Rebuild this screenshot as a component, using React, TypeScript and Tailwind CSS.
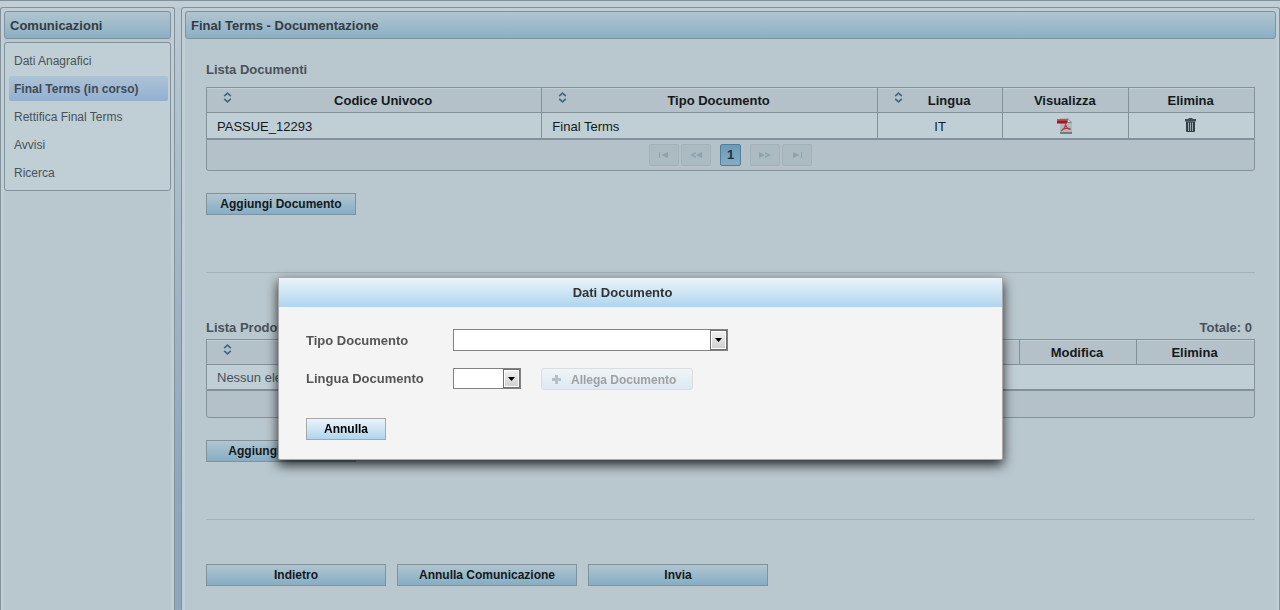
import { useState, type ReactNode } from 'react'

const menuItems = ['Dati Anagrafici', 'Final Terms (in corso)', 'Rettifica Final Terms', 'Avvisi', 'Ricerca']

const documents = [{ code: 'PASSUE_12293', type: 'Final Terms', language: 'IT' }]

function SortIcon() {
  return (
    <svg width="9" height="11" viewBox="0 0 9 11" fill="none" stroke="#3d6880" strokeWidth="1.6" aria-hidden="true">
      <path d="M1.2 4.2 4.5 1.2 7.8 4.2M1.2 6.8 4.5 9.8 7.8 6.8" />
    </svg>
  )
}

function PdfIcon() {
  return (
    <svg width="16" height="17" viewBox="0 0 16 17" aria-hidden="true">
      <path d="M3 1h8l4 4v10H3z" fill="#aeb8bd" />
      <path d="M10 1l5 5h-5z" fill="#75838b" />
      <path d="M11 2.500l2.500 2.500H11z" fill="#cdd6da" />
      <path d="M3 16h12" stroke="#1f2b32" />
      <path d="M0 2.500h10v4H0z" fill="#a81520" />
      <path d="M0 2.500h10v1.500H0z" fill="#c63a44" />
      <path d="M8.500 6.500c.3 3-1.500 5.500-4.500 7.500M8.600 8c.8 2.500 2.500 4 5 4.500M5.500 12.200c2.500-1 5-1.200 8-.3" fill="none" stroke="#b5383d" strokeWidth="1.1" />
    </svg>
  )
}

function TrashIcon() {
  return (
    <svg width="11" height="15" viewBox="0 0 11 15" aria-hidden="true">
      <path d="M3.500 0h4v1H11v2.500H0V1h3.500z" fill="#3e4b53" />
      <path d="M1 3.500h9V13a1 1 0 0 1-1 1H2a1 1 0 0 1-1-1z" fill="#323f47" />
      <path d="M3.500 4.500V13M5.500 4.500V13M7.500 4.500V13" stroke="#9aa8b0" strokeWidth="1" />
    </svg>
  )
}

function PanelTitle({ children }: { children: ReactNode }) {
  return (
    <h2 className="h-7 rounded-[3px] border border-[#82919a] bg-gradient-to-b from-[#b1c5cf] to-[#8bafc6] px-[5px] text-[13px] leading-7 font-bold text-[#333c42]">
      {children}
    </h2>
  )
}

function ActionButton({ width, children }: { width: string; children: ReactNode }) {
  return (
    <button
      type="button"
      className={`h-[22px] border border-[#82919a] bg-gradient-to-b from-[#b1c5cf] to-[#86adc5] text-center text-xs leading-5 font-bold text-[#14191c] ${width}`}
    >
      {children}
    </button>
  )
}

function HeaderCell({ width, sortable, children }: { width?: string; sortable?: boolean; children: ReactNode }) {
  return (
    <th className={`h-[25px] border border-[#82919a] bg-[#b4c1c9] p-0 pt-0.5 text-center text-[13px] leading-[22px] font-bold text-[#14191c] shadow-[inset_0_1px_0_#c0ced5] ${width ?? ''}`}>
      {sortable ? (
        <div className="flex items-start pr-[7px] pl-4">
          <span className="pt-0.5">
            <SortIcon />
          </span>
          <span className="flex-1">{children}</span>
        </div>
      ) : (
        <div className="pr-0.5">{children}</div>
      )}
    </th>
  )
}

function PageButton({ label, path }: { label: string; path: string }) {
  return (
    <button
      type="button"
      disabled
      aria-label={label}
      className="flex h-[22px] w-[30px] items-center justify-center rounded-xs border border-[#a3b1ba] bg-[#acbac2]"
    >
      <svg width="12" height="6" viewBox="0 0 12 6" fill="#8ba2af" aria-hidden="true">
        <path d={path} />
      </svg>
    </button>
  )
}

function SelectBox({ id, size, value, onChange, options }: {
  id: string
  size: string
  value: string
  onChange: (value: string) => void
  options: string[]
}) {
  return (
    <div className={`relative ${size}`}>
      <select
        id={id}
        value={value}
        onChange={(e) => onChange(e.target.value)}
        className="block h-full w-full appearance-none border border-[#828282] bg-white pr-5 pl-1 text-xs text-[#333]"
      >
        <option value=""></option>
        {options.map((o) => (
          <option key={o}>{o}</option>
        ))}
      </select>
      <span className="pointer-events-none absolute inset-y-px right-px flex w-[17px] items-center justify-center border border-[#707070] bg-gradient-to-b from-[#f2f2f2] to-[#cfcfcf] shadow-[inset_0_0_0_1px_#fff]">
        <svg width="7" height="4" viewBox="0 0 7 4" aria-hidden="true">
          <path d="M0 0h7L3.500 4z" fill="#000" />
        </svg>
      </span>
    </div>
  )
}

export default function App() {
  const [active, setActive] = useState('Final Terms (in corso)')
  const [docType, setDocType] = useState('')
  const [language, setLanguage] = useState('')

  return (
    <div className="flex h-screen flex-col overflow-hidden bg-[#c0ced5] font-['Liberation_Sans',Arial,sans-serif]">
      <div className="h-px shrink-0 bg-[#82919a]" />

      <div className="mt-1.5 flex min-h-0 flex-1 bg-gradient-to-b from-[#bccad3] to-[#8fa6bc] to-80%">
        {/* Sidebar */}
        <aside className="w-[175px] shrink-0 rounded-t-[3px] border border-b-0 border-[#82919a] bg-[#c0ced5] px-[3px] pt-[3px]">
          <div className="flex h-full flex-col bg-[#b9c7ce]">
            <PanelTitle>Comunicazioni</PanelTitle>
            <nav className="mt-[3px] flex flex-col gap-[3px] rounded-[3px] border border-[#82919a] bg-[#c0ced5] py-[5px] pr-0.5 pl-1">
              {menuItems.map((item) => (
                <a
                  key={item}
                  href="#"
                  onClick={() => setActive(item)}
                  className={`block h-[25px] rounded-xs px-[5px] text-xs leading-[26px] ${
                    item === active
                      ? 'bg-gradient-to-b from-[#adc2d5] to-[#93b0d3] font-bold text-[#3f4b55]'
                      : 'text-[#48525a]'
                  }`}
                >
                  {item}
                </a>
              ))}
            </nav>
          </div>
        </aside>

        {/* Main panel */}
        <main className="ml-1.5 min-w-0 flex-1 rounded-t-[3px] border border-b-0 border-[#82919a] bg-[#c0ced5] px-[3px] pt-[3px]">
          <div className="h-full bg-[#b9c7ce]">
            <PanelTitle>Final Terms - Documentazione</PanelTitle>

            <div className="px-[21px] pt-[21px]">
              <h3 className="text-[13px] leading-5 font-bold text-[#48525a]">Lista Documenti</h3>
              <table className="mt-[7px] w-full table-fixed border-collapse text-[13px] text-[#14191c]">
                <thead>
                  <tr>
                    <HeaderCell width="w-[32%]" sortable>Codice Univoco</HeaderCell>
                    <HeaderCell width="w-[32%]" sortable>Tipo Documento</HeaderCell>
                    <HeaderCell width="w-[12%]" sortable>Lingua</HeaderCell>
                    <HeaderCell width="w-[12%]">Visualizza</HeaderCell>
                    <HeaderCell width="w-[12%]">Elimina</HeaderCell>
                  </tr>
                </thead>
                <tbody>
                  {documents.map((d) => (
                    <tr key={d.code} className="bg-[#c0ced5]">
                      <td className="h-[26px] border border-[#82919a] px-2.5 pt-0.5 pb-0">{d.code}</td>
                      <td className="border border-[#82919a] px-2.5 pt-0.5 pb-0">{d.type}</td>
                      <td className="border border-[#82919a] p-0 pt-0.5 text-center">{d.language}</td>
                      <td className="border border-[#82919a] p-0 pr-0.5">
                        <button type="button" aria-label="Visualizza" className="mx-auto block">
                          <PdfIcon />
                        </button>
                      </td>
                      <td className="border border-[#82919a] p-0 pr-0.5">
                        <button type="button" aria-label="Elimina" className="mx-auto block">
                          <TrashIcon />
                        </button>
                      </td>
                    </tr>
                  ))}
                </tbody>
              </table>
              <div className="flex h-8 items-center justify-center rounded-b-[3px] border border-[#82919a] bg-[#b4c1c9]">
                <div className="flex gap-0.5">
                  <PageButton label="Prima pagina" path="M1 0h1v6H1zM10 0v6L3.500 3z" />
                  <PageButton label="Pagina precedente" path="M6 0v1.800L3 3l3 1.200V6L0 3zM12 0v6L6 3z" />
                </div>
                <button
                  type="button"
                  className="mx-[9px] h-[22px] w-[21px] rounded-xs border border-[#4f7f9b] bg-gradient-to-b from-[#6b9bb7] to-[#85acc2] text-center text-[13px] leading-5 font-bold text-[#22323c]"
                >
                  1
                </button>
                <div className="flex gap-0.5">
                  <PageButton label="Pagina successiva" path="M0 0v6l6-3zM6 0v1.800L9 3 6 4.200V6l6-3z" />
                  <PageButton label="Ultima pagina" path="M2 0v6l6.500-3zM10 0h1v6h-1z" />
                </div>
              </div>

              <div className="mt-[22px] flex">
                <ActionButton width="w-[150px]">Aggiungi Documento</ActionButton>
              </div>

              <hr className="mt-[57px] border-[#a4b2ba]" />

              <div className="mt-[45px] flex justify-between pr-[3px] text-[13px] leading-5 font-bold text-[#48525a]">
                <h3>Lista Prodotti</h3>
                <span>Totale: 0</span>
              </div>
              <table className="mt-px w-full table-fixed border-collapse text-[13px] text-[#48525a]">
                <thead>
                  <tr>
                    <HeaderCell sortable>Codice ISIN</HeaderCell>
                    <HeaderCell sortable>Denominazione</HeaderCell>
                    <HeaderCell width="w-[117px]">Modifica</HeaderCell>
                    <HeaderCell width="w-[118px]">Elimina</HeaderCell>
                  </tr>
                </thead>
                <tbody>
                  <tr className="bg-[#c0ced5]">
                    <td colSpan={4} className="h-[25px] border border-[#82919a] px-2.5 pt-0.5 pb-0">
                      Nessun elemento
                    </td>
                  </tr>
                </tbody>
              </table>
              <div className="h-7 rounded-b-[3px] border border-[#82919a] bg-[#b4c1c9]" />

              <div className="mt-[22px] flex">
                <ActionButton width="w-[150px]">Aggiungi Prodotto</ActionButton>
              </div>

              <hr className="mt-[57px] border-[#a4b2ba]" />

              <div className="mt-11 flex gap-[11px]">
                <ActionButton width="w-[180px]">Indietro</ActionButton>
                <ActionButton width="w-[180px]">Annulla Comunicazione</ActionButton>
                <ActionButton width="w-[180px]">Invia</ActionButton>
              </div>
            </div>
          </div>
        </main>
      </div>

      {/* Document dialog */}
      <div className="fixed inset-x-0 top-[277px] flex justify-center pl-px">
        <div
          role="dialog"
          aria-labelledby="dialog-title"
          className="w-[725px] rounded-xs border border-[#a8a8a8] bg-[#f4f4f4] shadow-[0_5px_12px_0_rgba(0,0,0,0.8)]"
        >
          <h2
            id="dialog-title"
            className="h-[29px] bg-gradient-to-b from-[#ebf4fa] to-[#afd5ee] pr-9 text-center text-[13px] leading-[30px] font-bold text-[#333]"
          >
            Dati Documento
          </h2>
          <form className="px-[27px] pt-[22px] pb-[19px] text-[13px] font-bold text-[#555]" onSubmit={(e) => e.preventDefault()}>
            <div className="flex items-start">
              <label htmlFor="doc-type" className="h-[22px] w-[147px] leading-6">Tipo Documento</label>
              <SelectBox id="doc-type" size="h-[22px] w-[275px]" value={docType} onChange={setDocType} options={['Final Terms']} />
            </div>
            <div className="mt-[17px] flex items-start">
              <label htmlFor="doc-language" className="h-[22px] w-[147px] leading-[22px]">Lingua Documento</label>
              <SelectBox id="doc-language" size="h-[21px] w-[68px]" value={language} onChange={setLanguage} options={['IT', 'EN']} />
              <button
                type="button"
                disabled
                className="ml-5 flex h-[22px] w-[152px] items-center rounded-[3px] border border-[#d9dee1] bg-gradient-to-b from-[#f0f4f7] to-[#dce9f2] pl-2.5 text-xs leading-[22px] font-bold text-[#a0a0a0]"
              >
                <svg width="9" height="9" viewBox="0 0 9 9" fill="#b4c1c9" aria-hidden="true">
                  <path d="M3 0h3v3h3v3H6v3H3V6H0V3h3z" />
                </svg>
                <span className="ml-2.5 pt-0.5">Allega Documento</span>
              </button>
            </div>
            <button
              type="button"
              className="mt-7 block h-[22px] w-20 border border-[#a8a8a8] bg-gradient-to-b from-[#ebf4fa] to-[#afd5ee] text-center text-xs leading-5 font-bold text-black"
            >
              Annulla
            </button>
          </form>
        </div>
      </div>
    </div>
  )
}
